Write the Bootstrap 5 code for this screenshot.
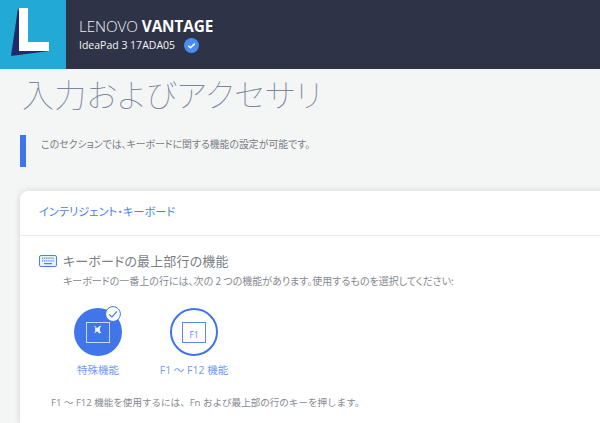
<!DOCTYPE html>
<html lang="ja">
<head>
  <meta charset="UTF-8" />
  <meta name="viewport" content="width=device-width, initial-scale=1.0"/>
  <title>Lenovo Vantage</title>
  <link href="https://cdn.jsdelivr.net/npm/bootstrap@5.3.0/dist/css/bootstrap.min.css" rel="stylesheet" />
  <style>
    html, body { height: 423px; overflow: hidden; }
    body { background: #f4f6f6; width: 600px; font-family: "Open Sans", "Noto Sans CJK JP", sans-serif; color: #6d7178; }
    .app-head { height: 69px; background: #2f3347; }
    .logo-box { width: 66px; height: 69px; background: #22a9d6; }
    .brand-wrap { margin-left: 13px; }
    .brand-name { font-size: 15.3px; line-height: 20px; color: #eef0f3; font-weight: 300; margin-top: 16px; letter-spacing: -0.1px; }
    .brand-name b { font-weight: 700; color: #fff; }
    .device-line { font-size: 10.5px; line-height: 16px; color: #f2f3f5; margin-top: 1px; gap: 9px; }
    .page-title { font-family: "Noto Sans CJK JP", sans-serif; font-weight: 100; font-size: 32px; line-height: 44px; color: #7a859f; margin: 2px 0 0 22px; font-feature-settings: "palt"; letter-spacing: .25px; }
    .intro-row { margin: 20px 0 0 20px; height: 32px; }
    .intro-bar { width: 6px; height: 32px; background: #3f74ea; }
    .intro-text { font-size: 9.9px; line-height: 14px; margin: 2px 0 0 15px; font-family: "Noto Sans CJK JP", sans-serif; font-feature-settings: "palt"; color: #777b82; }
    .kb-card { margin: 24px 0 0 20px; width: 600px; border: 0; border-radius: 8px 0 0 0; box-shadow: 0 0 6px rgba(0,0,0,.14); height: 232px; }
    .kb-card-head { height: 45px; border-bottom: 1px solid #e7e9ea; padding: 11px 0 0 19px; font-size: 11.25px; line-height: 18px; color: #4a80ee; font-family: "Noto Sans CJK JP", sans-serif; font-feature-settings: "palt"; }
    .kb-title-row { margin: 15px 0 0 19px; gap: 6px; }
    .kb-title { font-size: 13px; line-height: 19px; color: #7b7f86; font-family: "Noto Sans CJK JP", sans-serif; font-feature-settings: "palt"; letter-spacing: .15px; }
    .kb-desc { margin: 3px 0 0 43px; font-size: 10px; line-height: 15px; font-family: "Noto Sans CJK JP", sans-serif; font-feature-settings: "palt"; color: #858990; }
    .opt-row { margin: 20px 0 0 30px; }
    .opt-item { width: 96px; }
    .opt-circle { width: 48px; height: 48px; border-radius: 50%; }
    .opt-on { background: #4076ea; }
    .opt-off { background: #fff; border: 2px solid #3f74ea; }
    .opt-tick { position: absolute; top: -2px; right: 1px; width: 16px; height: 16px; }
    .opt-label { margin-top: 6px; font-size: 10.5px; line-height: 16px; color: #6f9bf0; white-space: nowrap; }
    .kb-note { margin: 17px 0 0 31px; font-size: 9.55px; line-height: 15px; color: #85898f; }
  </style>
</head>
<body>

<div class="app-head d-flex">
  <div class="logo-box">
    <svg width="66" height="69" viewBox="0 0 66 69">
      <polygon points="18,8 11,56 49,51 27,43" fill="#1d2a6b"/>
      <polygon points="19,8 28,8 28,42 49,42 49,51 19,51" fill="#fff"/>
    </svg>
  </div>
  <div class="brand-wrap">
    <div class="brand-name">LENOVO <b>VANTAGE</b></div>
    <div class="device-line d-flex align-items-center">
      <span>IdeaPad 3 17ADA05</span>
      <svg width="15" height="15" viewBox="0 0 15 15">
        <circle cx="7.5" cy="7.5" r="7.5" fill="#4a8cf5"/>
        <path d="M4.3 7.8 L6.5 9.8 L10.8 5.6" fill="none" stroke="#fff" stroke-width="1.5"/>
      </svg>
    </div>
  </div>
</div>

<h1 class="page-title">入力およびアクセサリ</h1>

<div class="intro-row d-flex">
  <div class="intro-bar"></div>
  <div class="intro-text">このセクションでは、キーボードに関する機能の設定が可能です。</div>
</div>

<div class="card kb-card">
  <div class="kb-card-head">インテリジェント・キーボード</div>
  <div class="kb-title-row d-flex align-items-center">
    <svg width="18" height="12" viewBox="0 0 18 12">
      <rect x=".5" y=".5" width="17" height="11" rx="1.5" fill="#eaf1fe" stroke="#4a80ee"/>
      <path d="M3 3.2h12M3 5.8h12" stroke="#4a80ee" stroke-width="1.2" stroke-dasharray="1.2 .9"/>
      <path d="M5 8.6h8" stroke="#4a80ee" stroke-width="1.2"/>
    </svg>
    <div class="kb-title">キーボードの最上部行の機能</div>
  </div>
  <div class="kb-desc">キーボードの一番上の行には、次の 2 つの機能があります。使用するものを選択してください:</div>

  <div class="opt-row d-flex">
    <div class="opt-item d-flex flex-column align-items-center">
      <div class="opt-circle opt-on position-relative d-flex align-items-center justify-content-center">
        <svg width="24" height="21" viewBox="0 0 24 21">
          <rect x=".5" y=".5" width="23" height="20" fill="none" stroke="#c9d8fa"/>
          <path d="M9 6h2l3-2.2v8l-3-2.2H9z" fill="#dfe8fc"/>
          <path d="M8.5 4l6.5 7M15 4l-6.5 7" stroke="#fff" stroke-width="1"/>
        </svg>
        <svg class="opt-tick" viewBox="0 0 16 16">
          <circle cx="8" cy="8" r="7.4" fill="#fff" stroke="#4076ea" stroke-width="1"/>
          <path d="M4.2 8.4L7 11l5-5.6" fill="none" stroke="#4076ea" stroke-width="1.2"/>
        </svg>
      </div>
      <div class="opt-label">特殊機能</div>
    </div>
    <div class="opt-item d-flex flex-column align-items-center">
      <div class="opt-circle opt-off d-flex align-items-center justify-content-center">
        <svg width="24" height="21" viewBox="0 0 24 21">
          <rect x=".5" y=".5" width="23" height="20" fill="none" stroke="#5a88ec"/>
          <text x="12" y="16" text-anchor="middle" font-size="8.5" fill="#5a88ec" font-family="Open Sans, sans-serif">F1</text>
        </svg>
      </div>
      <div class="opt-label">F1 ～ F12 機能</div>
    </div>
  </div>

  <div class="kb-note">F1 ～ F12 機能を使用するには、Fn および最上部の行のキーを押します。</div>
</div>

<script src="https://cdn.jsdelivr.net/npm/bootstrap@5.3.0/dist/js/bootstrap.bundle.min.js"></script>
</body>
</html>
